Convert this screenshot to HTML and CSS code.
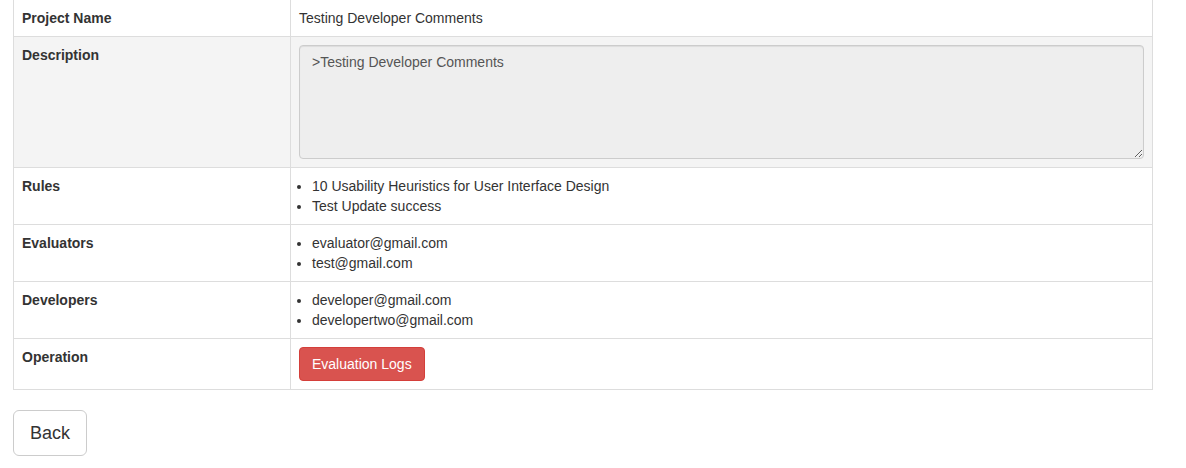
FILE: index.html
```html
<!DOCTYPE html>
<html>
<head>
<meta charset="utf-8">
<link rel="stylesheet" href="styles.css">
</head>
<body>
<div class="page">
  <table class="details">
    <tbody>
      <tr>
        <th>Project Name</th>
        <td>Testing Developer Comments</td>
      </tr>
      <tr class="shade">
        <th>Description</th>
        <td><textarea class="desc" readonly>&gt;Testing Developer Comments</textarea></td>
      </tr>
      <tr>
        <th>Rules</th>
        <td>
          <ul class="items">
            <li>10 Usability Heuristics for User Interface Design</li>
            <li>Test Update success</li>
          </ul>
        </td>
      </tr>
      <tr>
        <th>Evaluators</th>
        <td>
          <ul class="items">
            <li>evaluator@gmail.com</li>
            <li>test@gmail.com</li>
          </ul>
        </td>
      </tr>
      <tr>
        <th>Developers</th>
        <td>
          <ul class="items">
            <li>developer@gmail.com</li>
            <li>developertwo@gmail.com</li>
          </ul>
        </td>
      </tr>
      <tr>
        <th>Operation</th>
        <td><button class="btn btn-danger" type="button">Evaluation Logs</button></td>
      </tr>
    </tbody>
  </table>
  <button class="btn btn-back" type="button">Back</button>
</div>
</body>
</html>
```

FILE: styles.css
```css
html, body {
  margin: 0;
  padding: 0;
  background: #fff;
}
body {
  font-family: "Liberation Sans", Arial, Helvetica, sans-serif;
  font-size: 14px;
  line-height: 20px;
  color: #333;
}
.page {
  padding: 0 0 0 13px;
  margin-top: -1px;
}
.details {
  width: 1140px;
  border-collapse: collapse;
  border: 1px solid #ddd;
}
.details th,
.details td {
  border: 1px solid #ddd;
  padding: 8px;
  vertical-align: top;
  text-align: left;
  line-height: 20px;
}
.details th {
  width: 260px;
  font-weight: bold;
}
.details .shade th,
.details .shade td {
  background: #f4f4f4;
}
.desc {
  display: block;
  box-sizing: border-box;
  width: 100%;
  height: 114px;
  margin: 0;
  padding: 6px 12px;
  font-family: inherit;
  font-size: 14px;
  line-height: 20px;
  color: #555;
  background: #eee;
  border: 1px solid #ccc;
  border-radius: 4px;
  box-shadow: inset 0 1px 1px rgba(0,0,0,.075);
  resize: vertical;
  outline: none;
}
.items {
  margin: 0;
  padding-left: 13px;
}
.btn {
  display: inline-block;
  font-family: inherit;
  font-size: 14px;
  line-height: 20px;
  padding: 6px 12px;
  border: 1px solid transparent;
  border-radius: 4px;
  cursor: pointer;
  margin: 0;
}
.btn-danger {
  color: #fff;
  background: #d9534f;
  border-color: #d43f3a;
}
.btn-back {
  margin-top: 20px;
  font-size: 18px;
  line-height: 24px;
  padding: 10px 16px;
  border-radius: 6px;
  color: #333;
  background: #fff;
  border-color: #ccc;
}
```
